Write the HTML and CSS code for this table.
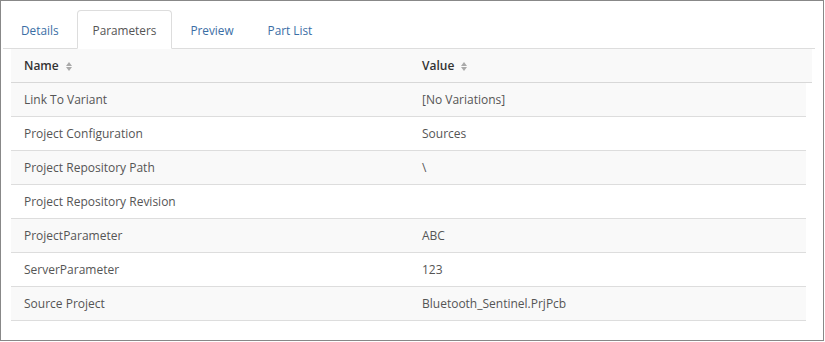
FILE: index.html
```html
<!DOCTYPE html>
<html>
<head>
<meta charset="utf-8">
<link rel="stylesheet" href="styles.css">
</head>
<body>
<div class="panel">
  <ul class="tabs">
    <li class="tab"><a>Details</a></li>
    <li class="tab active"><a>Parameters</a></li>
    <li class="tab"><a>Preview</a></li>
    <li class="tab"><a>Part List</a></li>
  </ul>
  <div class="grid">
    <div class="head">
      <div class="cell name">Name <span class="sort"></span></div>
      <div class="cell">Value <span class="sort"></span></div>
    </div>
    <div class="row odd"><div class="cell name">Link To Variant</div><div class="cell">[No Variations]</div></div>
    <div class="row"><div class="cell name">Project Configuration</div><div class="cell">Sources</div></div>
    <div class="row odd"><div class="cell name">Project Repository Path</div><div class="cell">\</div></div>
    <div class="row"><div class="cell name">Project Repository Revision</div><div class="cell"></div></div>
    <div class="row odd"><div class="cell name">ProjectParameter</div><div class="cell">ABC</div></div>
    <div class="row"><div class="cell name">ServerParameter</div><div class="cell">123</div></div>
    <div class="row odd"><div class="cell name">Source Project</div><div class="cell">Bluetooth_Sentinel.PrjPcb</div></div>
  </div>
</div>
</body>
</html>
```
FILE: styles.css
```css
* { box-sizing: border-box; }
html, body { margin: 0; padding: 0; background: #fff; }
body { font-family: "Open Sans", "Liberation Sans", sans-serif; font-size: 12px; color: #555; }
.panel {
  width: 824px;
  height: 341px;
  border: 1px solid #888;
  padding: 9px 8px 0 2px;
}
.tabs {
  list-style: none;
  margin: 0;
  padding: 0 0 0 2px;
  display: flex;
  border-bottom: 1px solid #ddd;
}
.tab { margin: 0 2px -1px 0; }
.tab a {
  display: block;
  padding: 11px 15px 9px;
  line-height: 17px;
  font-size: 11.8px;
  border: 1px solid transparent;
  border-radius: 4px 4px 0 0;
  color: #3a6ea5;
}
.tab.active a {
  color: #555;
  background: #fff;
  border-color: #ddd #ddd transparent #ddd;
}
.grid { padding: 0 0 0 8px; }
.head {
  display: flex;
  height: 34px;
  width: 801px;
  background: #f9f9f9;
  border-bottom: 1px solid #d8d8d8;
  color: #333;
  font-weight: 600;
}
.row {
  display: flex;
  height: 34px;
  border-bottom: 1px solid #ddd;
  width: 795px;
}
.head .cell { line-height: 34px; }
.row.odd { background: #f9f9f9; }
.cell { padding: 0 13px; line-height: 33px; white-space: nowrap; }
.cell.name { width: 398px; }
.sort {
  display: inline-block;
  position: relative;
  width: 6px;
  height: 9px;
  margin-left: 4px;
  vertical-align: -1px;
}
.sort::before, .sort::after {
  content: "";
  position: absolute;
  left: 0;
  border-left: 3px solid transparent;
  border-right: 3px solid transparent;
}
.sort::before { top: 0; border-bottom: 4px solid #aaa; }
.sort::after { bottom: 0; border-top: 4px solid #aaa; }
```
